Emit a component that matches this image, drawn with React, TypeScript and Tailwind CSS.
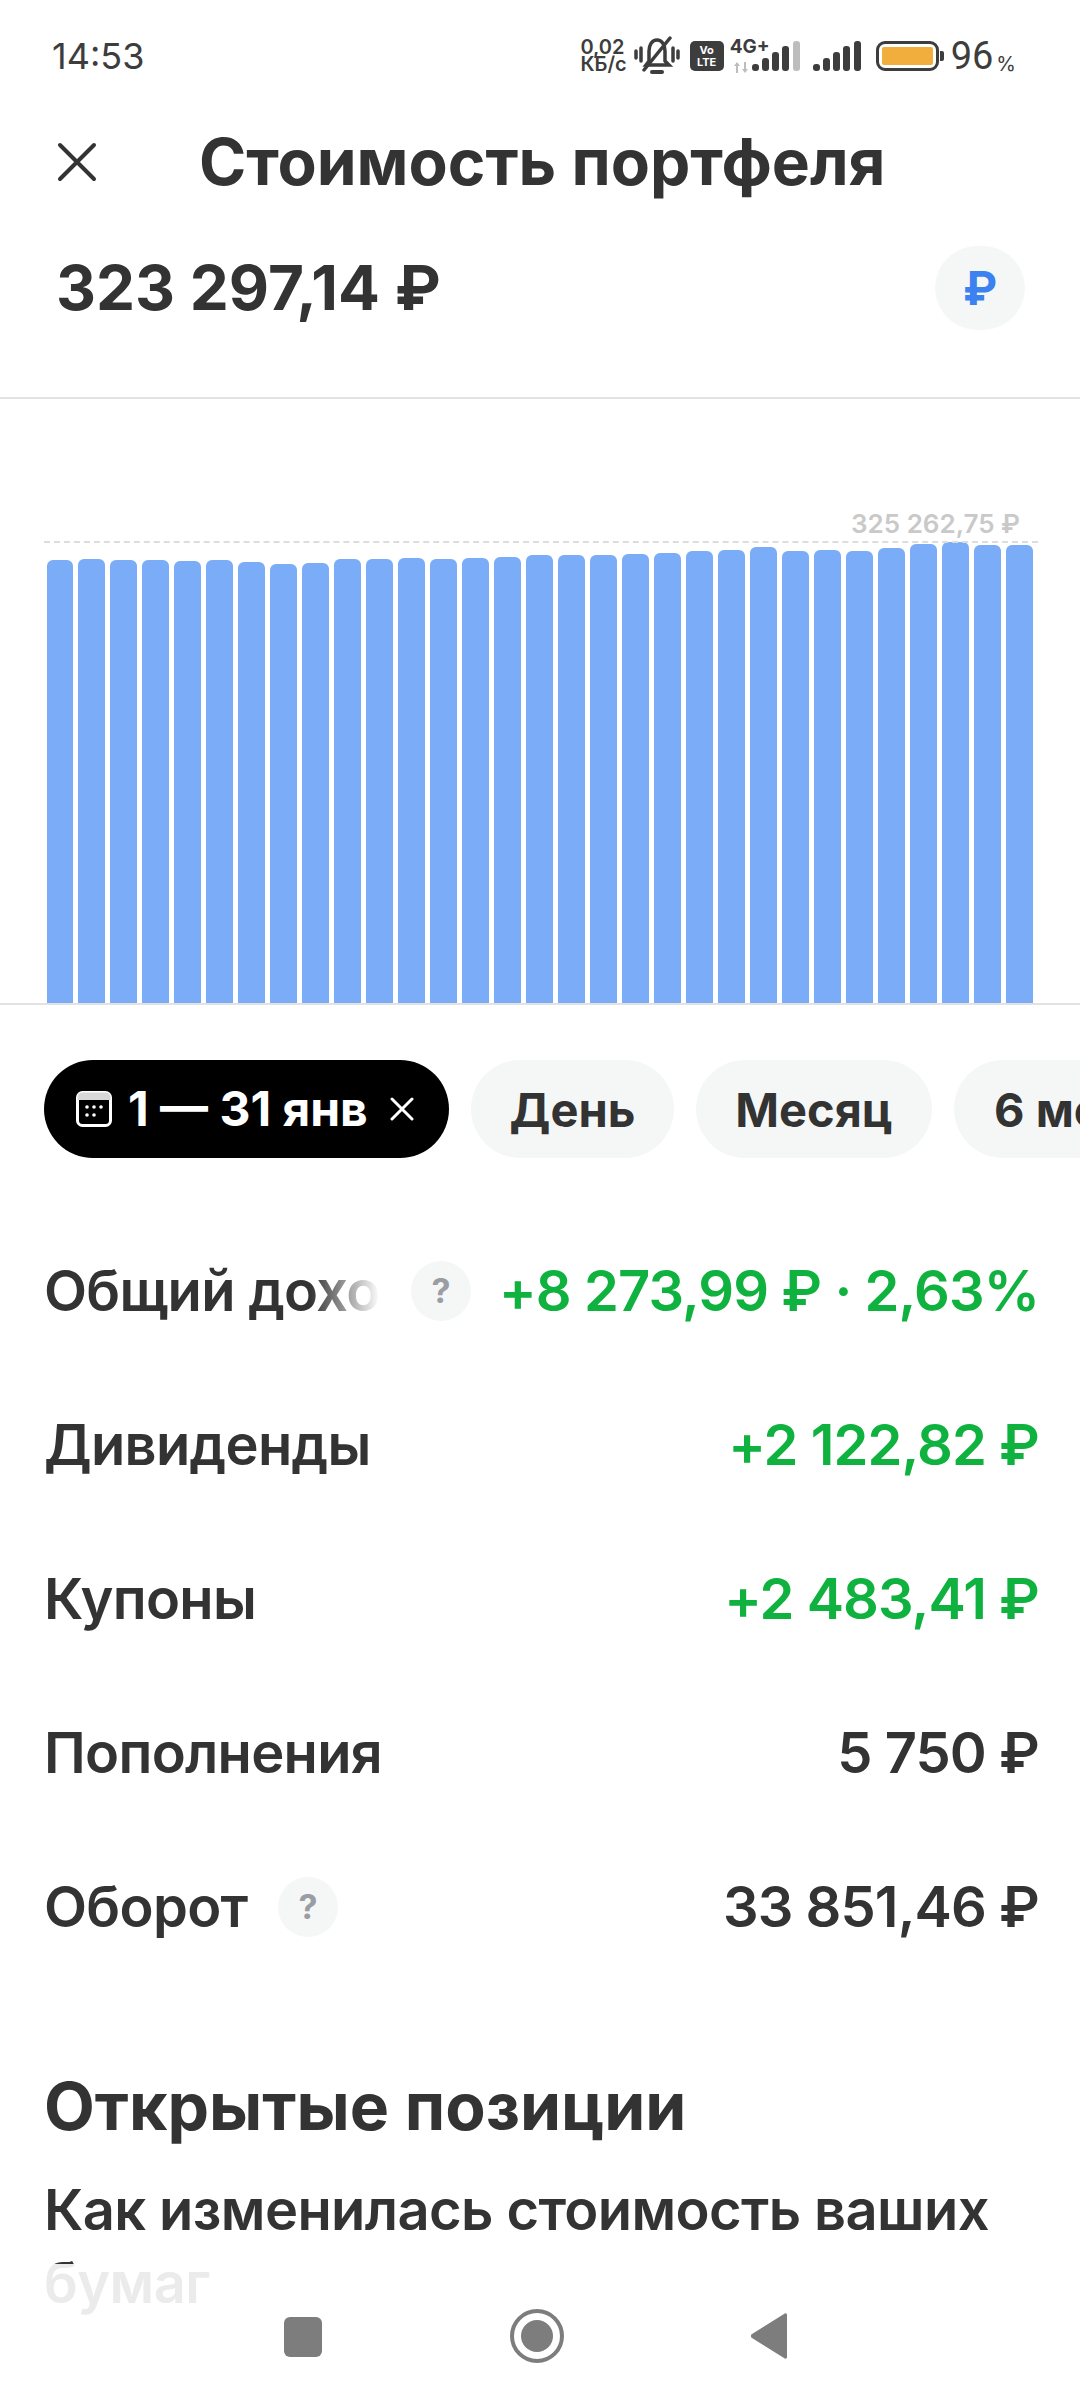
const tops = [560.3,559.3,560,560.3,561,560.3,561.7,564,563.3,559,559.3,558.3,559,558.3,556.7,555.3,555.3,554.7,554,553,551,549.7,547,551,550,551,548.3,544.3,542,545,545];

function Signal({ grey }: { grey?: boolean }) {
  return (
    <svg width="48" height="30" viewBox="0 0 48 30" className="block">
      <rect x="0" y="23" width="7" height="7" rx="3" fill="#3d3d3d" />
      <rect x="10" y="17" width="7" height="13" rx="3" fill="#3d3d3d" />
      <rect x="20" y="11" width="7" height="19" rx="3" fill="#3d3d3d" />
      <rect x="30" y="5" width="7" height="25" rx="3" fill="#3d3d3d" />
      <rect x="41" y="0" width="7" height="30" rx="3" fill={grey ? "#bdbdbd" : "#3d3d3d"} />
    </svg>
  );
}

function Question() {
  return (
    <span className="flex h-[60px] w-[60px] shrink-0 items-center justify-center rounded-full bg-[#f5f7f7] text-[34px] font-bold text-[#9a9da3]">?</span>
  );
}

function Row({ label, value, green, hint }: { label: string; value: string; green?: boolean; hint?: boolean }) {
  return (
    <div className="flex h-[154px] items-center justify-between">
      <div className="flex items-center gap-[30px] tracking-[-0.7px]">
        <span>{label}</span>
        {hint && <Question />}
      </div>
      <span className={green ? "tracking-[-0.9px] text-[#0fb23f]" : "tracking-[-0.9px]"}>{value}</span>
    </div>
  );
}

export default function App() {
  return (
    <div className="relative h-[2400px] w-[1080px] overflow-hidden bg-white font-['Inter',sans-serif] text-[#333333]">
      {/* status bar */}
      <div className="flex h-[108px] items-center pl-[52px] pr-[64px] pt-[4px] text-[#3d3d3d]">
        <span className="text-[36px] leading-none">14:53</span>
        <div className="ml-auto flex items-center">
          <div className="whitespace-pre-line text-[20px] font-semibold leading-[17px]">{"0,02\nКБ/с"}</div>
          <svg width="46" height="40" viewBox="0 0 46 40" fill="none" stroke="#3d3d3d" strokeWidth="3.5" strokeLinecap="round" className="ml-[7px] block">
            <path d="M12 29 L15 25 V15 C15 9 18 4 23 4 C28 4 31 9 31 15 V25 L35 29 Z" />
            <path d="M10 34 L36 2" />
            <path d="M18 36 H28" strokeWidth="4" />
            <path d="M2 15 V22 M7 12 V25 M39 12 V25 M44 15 V22" />
          </svg>
          <div className="ml-[10px] flex h-[30px] w-[34px] flex-col items-center justify-center rounded-[5px] bg-[#3d3d3d] text-[11px] font-bold leading-[12px] text-white">
            <span>Vo</span>
            <span>LTE</span>
          </div>
          <div className="ml-[6px] flex h-[34px] w-[22px] flex-col items-start justify-between">
            <span className="w-[40px] text-[19px] font-bold leading-[16px]">4G+</span>
            <svg width="16" height="11" viewBox="0 0 16 11" className="ml-[3px] block" fill="#bdbdbd">
              <path d="M1 4 L4 0 L7 4 H5 V11 H3 V4 Z M9 7 L12 11 L15 7 H13 V0 H11 V7 Z" />
            </svg>
          </div>
          <div className="ml-0"><Signal grey /></div>
          <div className="ml-[13px]"><Signal /></div>
          <div className="ml-[15px] flex items-center">
            <div className="flex h-[30px] w-[63px] items-center rounded-[9px] border-[3.5px] border-[#3d3d3d] p-[3px]">
              <div className="h-full w-full rounded-[2px] bg-[#f2ae3d]" />
            </div>
            <div className="ml-[1px] h-[10px] w-[4px] rounded-r-[2px] bg-[#3d3d3d]" />
          </div>
          <span className="ml-[7px] font-['Roboto',sans-serif] text-[38px] leading-none">96</span>
          <span className="ml-[3px] self-end text-[20px] leading-[24px]">%</span>
        </div>
      </div>

      {/* header */}
      <div className="flex h-[108px] items-center pl-[57px]">
        <svg width="40" height="40" viewBox="0 0 40 40" fill="none" stroke="#333333" strokeWidth="4" strokeLinecap="round" className="block">
          <path d="M3 3 L37 37 M37 3 L3 37" />
        </svg>
        <h1 className="ml-[102px] text-[64px] font-bold leading-none">Стоимость портфеля</h1>
      </div>

      {/* value */}
      <div className="flex items-center justify-between border-b-2 border-[#e2e2e2] pb-[67px] pl-[56px] pr-[55px] pt-[30px]">
        <span className="text-[62px] font-bold leading-none">323 297,14 ₽</span>
        <span className="flex h-[84px] w-[90px] items-center justify-center rounded-full bg-[#f5f7f7] text-[46px] font-bold text-[#3b82f0]">₽</span>
      </div>

      {/* chart */}
      <div className="relative flex h-[606px] items-end gap-[5.33px] border-b-2 border-[#e2e2e2] pl-[46.5px]">
        {tops.map((t, i) => (
          <div key={i} className="w-[26.67px] shrink-0 rounded-t-[6px] bg-[#7aacf7]" style={{ height: 1003 - t }} />
        ))}
        <div className="absolute left-[44px] right-[42px] top-[142px] border-t-2 border-dashed border-[#dddddd]" />
        <span className="absolute right-[60px] top-[112px] text-[26px] font-semibold leading-none text-[#c9c9c9]">325 262,75 ₽</span>
      </div>

      {/* chips */}
      <div className="flex gap-[22px] overflow-hidden pl-[44px] pt-[55px] text-[47px] font-bold leading-none">
        <div className="flex h-[98px] w-[405px] shrink-0 items-center rounded-full bg-black pl-[32px] text-[48px] text-white">
          <svg width="36" height="36" viewBox="0 0 36 36" fill="none" className="block shrink-0">
            <rect x="1.5" y="1.5" width="33" height="33" rx="5" stroke="#ffffff" strokeWidth="3" />
            <path d="M1.5 6 A5 5 0 0 1 6 1.5 H30 A5 5 0 0 1 34.5 6 V9 H1.5 Z" fill="#d8d8d8" />
            <g fill="#ffffff">
              <circle cx="11" cy="16" r="1.8" /><circle cx="18" cy="16" r="1.8" /><circle cx="25" cy="16" r="1.8" />
              <circle cx="11" cy="24" r="1.8" /><circle cx="18" cy="24" r="1.8" />
            </g>
          </svg>
          <span className="ml-[16px] whitespace-nowrap">1 — 31 янв</span>
          <svg width="24" height="24" viewBox="0 0 24 24" fill="none" stroke="#ffffff" strokeWidth="3" strokeLinecap="round" className="ml-[22px] block shrink-0">
            <path d="M2 2 L22 22 M22 2 L2 22" />
          </svg>
        </div>
        <div className="flex h-[98px] w-[203px] shrink-0 items-center justify-center rounded-full bg-[#f5f7f7]">День</div>
        <div className="flex h-[98px] w-[236px] shrink-0 items-center justify-center rounded-full bg-[#f5f7f7]">Месяц</div>
        <div className="flex h-[98px] w-[200px] shrink-0 items-center rounded-full bg-[#f5f7f7] pl-[40px] whitespace-nowrap">6 мес</div>
      </div>

      {/* rows */}
      <div className="mt-[56px] pl-[44px] pr-[41px] text-[56px] font-semibold leading-none">
        <div className="flex h-[154px] items-center">
          <div className="relative w-[336px] shrink-0 overflow-hidden whitespace-nowrap leading-[68px] tracking-[-0.7px]">
            Общий доход
            <div className="absolute inset-y-0 right-0 w-[70px] bg-gradient-to-r from-transparent to-white" />
          </div>
          <div className="ml-[31px]"><Question /></div>
          <span className="ml-auto whitespace-nowrap tracking-[-0.9px] text-[#0fb23f]">+8 273,99 ₽ · 2,63%</span>
        </div>
        <Row label="Дивиденды" value="+2 122,82 ₽" green />
        <Row label="Купоны" value="+2 483,41 ₽" green />
        <Row label="Пополнения" value="5 750 ₽" />
        <Row label="Оборот" value="33 851,46 ₽" hint />
      </div>

      {/* section */}
      <div className="mt-[87px] px-[44px]">
        <h2 className="text-[66px] font-bold leading-[70px]">Открытые позиции</h2>
        <p className="mt-[33px] text-[56px] font-semibold leading-[73px] tracking-[-0.6px]">Как изменилась стоимость ваших бумаг</p>
      </div>

      {/* navigation overlay */}
      <div className="absolute inset-x-0 bottom-0 flex h-[136px] items-start bg-white/90 pl-[284px] pt-[45px]">
        <div className="mt-[8px] h-[40px] w-[38px] rounded-[6px] bg-[#7d7d7d]" />
        <div className="ml-[188px] flex h-[54px] w-[54px] items-center justify-center rounded-full border-[4px] border-[#7d7d7d]">
          <div className="h-[32px] w-[32px] rounded-full bg-[#7d7d7d]" />
        </div>
        <svg width="36" height="46" viewBox="0 0 36 46" className="ml-[187px] mt-[4px] block" fill="#7d7d7d">
          <path d="M36 2 V44 C36 46 34 46 33 45 L1 25 C-0.5 24 -0.5 22 1 21 L33 1 C34 0 36 0 36 2 Z" />
        </svg>
      </div>
    </div>
  );
}
